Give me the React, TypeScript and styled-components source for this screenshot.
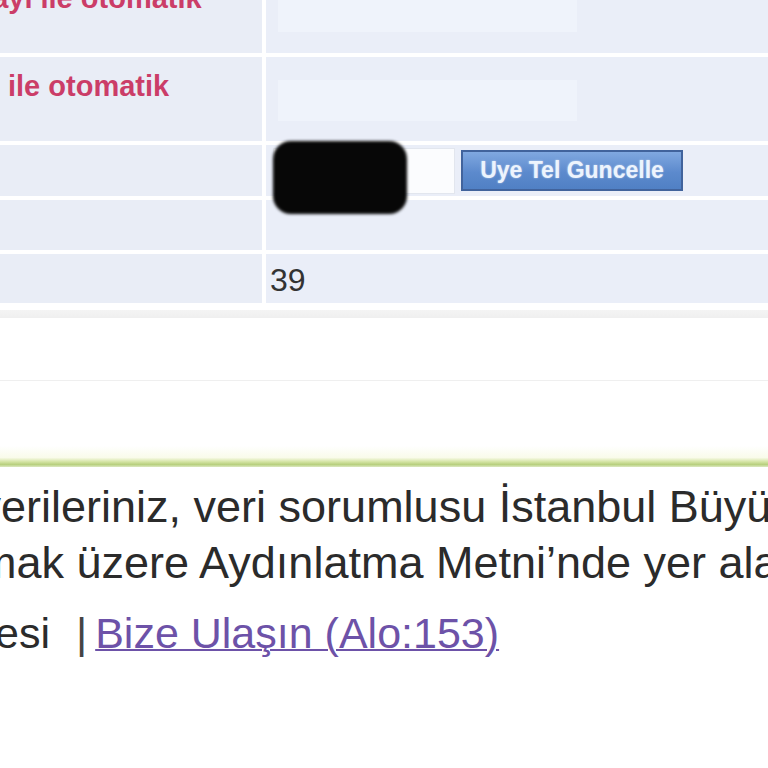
import React from "react";
import styled, { createGlobalStyle } from "styled-components";

const GlobalStyle = createGlobalStyle`
  html, body {
    margin: 0;
    padding: 0;
    background: #ffffff;
    overflow: hidden;
  }
  body {
    font-family: "Liberation Sans", Arial, sans-serif;
  }
`;

export default function App() {
  return (
    <>
      <GlobalStyle />
      <Page>
        <Table>
          <LabelCell $pt={13}>
            <Label $shift={-32}>sayı ile otomatik</Label>
          </LabelCell>
          <ValueCell $pt={23}>
            <SoftInput />
          </ValueCell>

          <LabelCell $pt={12}>
            <Label>ile otomatik</Label>
          </LabelCell>
          <ValueCell $pt={23}>
            <SoftInput />
          </ValueCell>

          <LabelCell />
          <ValueCell $center>
            <PhoneWrap>
              <PhoneInput />
              <Redaction />
            </PhoneWrap>
            <UpdateButton>Uye Tel Guncelle</UpdateButton>
          </ValueCell>

          <LabelCell />
          <ValueCell />

          <LabelCell />
          <ValueCell $center>
            <Value>39</Value>
          </ValueCell>
        </Table>

        <GreyBand />
        <FaintRule />
        <GreenRule />

        <Notice>
          <Line $shift={-164}>
            Kişisel verileriniz, veri sorumlusu İstanbul Büyükşehir Belediyesi
          </Line>
          <Line $shift={-56}>
            olmak üzere Aydınlatma Metni’nde yer alan amaçlarla
          </Line>
          <LinksLine $shift={-146}>
            Belediyesi
            <Pipe>|</Pipe>
            <FooterLink href="#">Bize Ulaşın (Alo:153)</FooterLink>
          </LinksLine>
        </Notice>
      </Page>
    </>
  );
}

const Page = styled.div`
  width: 768px;
  height: 768px;
  overflow: hidden;
  display: flex;
  flex-direction: column;
`;

const Table = styled.div`
  margin-top: -32px;
  display: grid;
  grid-template-columns: 262px 1fr;
  grid-template-rows: 85px 84px 51px 50px 49px;
  column-gap: 4px;
  row-gap: 4px;
  background: #ffffff;
`;

const LabelCell = styled.div<{ $pt?: number }>`
  background: #e9edf6;
  padding: ${(p) => p.$pt ?? 0}px 0 0 8px;
`;

const ValueCell = styled.div<{ $pt?: number; $center?: boolean }>`
  background: #eaeef8;
  display: flex;
  align-items: ${(p) => (p.$center ? "center" : "flex-start")};
  padding: ${(p) => p.$pt ?? 0}px 0 0 4px;
  position: relative;
`;

const Label = styled.div<{ $shift?: number }>`
  margin-left: ${(p) => p.$shift ?? 0}px;
  font-weight: bold;
  font-size: 29px;
  line-height: 34px;
  color: #cb3d68;
  white-space: nowrap;
`;

const SoftInput = styled.div`
  margin-left: 8px;
  width: 299px;
  height: 41px;
  background: #eff3fb;
`;

const PhoneWrap = styled.div`
  position: relative;
  width: 182px;
  height: 46px;
  margin-left: 3px;
`;

const PhoneInput = styled.div`
  width: 100%;
  height: 100%;
  background: #fbfcfe;
  border: 1px solid #e2e6ee;
  box-sizing: border-box;
`;

const Redaction = styled.div`
  position: absolute;
  left: 0;
  top: -7px;
  width: 134px;
  height: 73px;
  background: #070707;
  border-radius: 18px;
  filter: blur(1.5px);
  z-index: 2;
`;

const UpdateButton = styled.button`
  margin-left: 6px;
  width: 222px;
  height: 41px;
  padding: 0;
  border: 2px solid #41639c;
  background: linear-gradient(#80a8e0, #5c8acd 55%, #5080c4);
  color: #edf4fd;
  font-family: "Liberation Sans", Arial, sans-serif;
  font-weight: bold;
  font-size: 23px;
  text-shadow: 0 0 2px rgba(255, 255, 255, 0.6);
  white-space: nowrap;
`;

const Value = styled.span`
  font-size: 32px;
  color: #333333;
  margin-top: 4px;
`;

const GreyBand = styled.div`
  margin-top: 7px;
  height: 8px;
  background: linear-gradient(#f4f4f4, #efefef);
`;

const FaintRule = styled.div`
  height: 62px;
  border-bottom: 1px solid #efefef;
`;

const GreenRule = styled.div`
  margin-top: 65px;
  height: 21px;
  background: linear-gradient(
    #ffffff 0%,
    #f9fbea 55%,
    #d4e4a4 75%,
    #b8d07f 88%,
    #dce8bf 100%
  );
`;

const Notice = styled.div`
  padding-top: 12px;
  font-size: 45px;
  color: #2b2b2b;
  white-space: nowrap;
`;

const Line = styled.div<{ $shift: number }>`
  margin-left: ${(p) => p.$shift}px;
  line-height: 56px;
`;

const LinksLine = styled(Line)`
  margin-top: 14px;
  font-size: 43px;
`;

const Pipe = styled.span`
  margin: 0 8px 0 26px;
  color: #444444;
`;

const FooterLink = styled.a`
  color: #6d52a8;
  text-decoration: underline;
  text-decoration-thickness: 2px;
`;
